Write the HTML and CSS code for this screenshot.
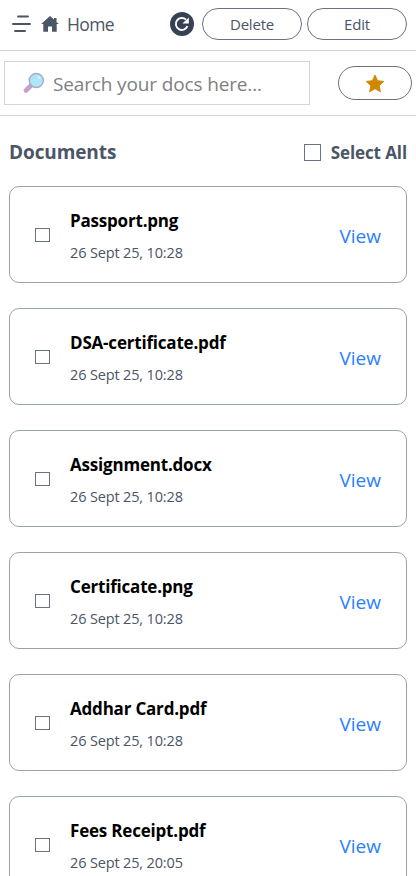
FILE: index.html
```html
<!DOCTYPE html>
<html lang="en">
<head>
<meta charset="utf-8">
<title>Documents</title>
<link rel="stylesheet" href="styles.css">
</head>
<body>
<header class="topbar">
  <svg class="menu" width="20" height="18" viewBox="0 0 20 18"><path d="M7 1.500h10M2 9h17M4 16h10" fill="none" stroke="currentColor" stroke-width="1.9" stroke-linecap="round"/></svg>
  <svg class="house" width="18" height="18" viewBox="0 0 18 18"><path d="M9 1 .2 9h2.100v7.800H7V11.500h4v5.300h4.700V9h2.100l-2.300-2.100V3H13v1.600z" fill="currentColor"/></svg>
  <span class="home">Home</span>
  <svg class="refresh" width="24" height="24" viewBox="0 0 24 24"><circle cx="12" cy="12" r="12" fill="#364153"/><path d="M17.400 14.200A6 6 0 1 1 16 7.600" fill="none" stroke="#fff" stroke-width="1.900"/><path d="M18.800 5.500v6.100h-6.400z" fill="#fff"/></svg>
  <button class="pill delete"><span>Delete</span></button>
  <button class="pill edit"><span>Edit</span></button>
</header>
<section class="searchbar">
  <div class="search">
    <svg class="lens" width="22" height="22" viewBox="0 0 22 22"><path d="M3 18.500 8 13.500" stroke="#c5a3c8" stroke-width="4.600" stroke-linecap="round"/><path d="m7.500 14 2-2" stroke="#aaa0bd" stroke-width="2.500"/><circle cx="13.300" cy="8.500" r="7" fill="#ace7f6" stroke="#afa9cf" stroke-width="1.500"/><ellipse cx="16" cy="5.500" rx="1.600" ry="1.100" fill="#d5f5fc" transform="rotate(35 16 5.500)"/></svg>
    <span class="hint">Search your docs here...</span>
  </div>
  <button class="pill favorite"><svg width="20" height="19" viewBox="0 0 20 19"><path d="m10 1 2.600 5.700 6.200.7-4.600 4.200 1.200 6.200L10 14.700l-5.400 3.100 1.200-6.200L1.200 7.400l6.200-.7z" fill="#d08700" stroke="#d08700" stroke-width=".9" stroke-linejoin="round"/></svg></button>
</section>
<main>
  <div class="heading">
    <h1>Documents</h1>
    <label class="all"><i class="box large"></i><b>Select All</b></label>
  </div>
  <article class="card"><i class="box"></i><div class="info"><h2>Passport.png</h2><p>26 Sept 25, 10:28</p></div><a class="view">View</a></article>
  <article class="card"><i class="box"></i><div class="info"><h2>DSA-certificate.pdf</h2><p>26 Sept 25, 10:28</p></div><a class="view">View</a></article>
  <article class="card"><i class="box"></i><div class="info"><h2>Assignment.docx</h2><p>26 Sept 25, 10:28</p></div><a class="view">View</a></article>
  <article class="card"><i class="box"></i><div class="info"><h2>Certificate.png</h2><p>26 Sept 25, 10:28</p></div><a class="view">View</a></article>
  <article class="card"><i class="box"></i><div class="info"><h2>Addhar Card.pdf</h2><p>26 Sept 25, 10:28</p></div><a class="view">View</a></article>
  <article class="card"><i class="box"></i><div class="info"><h2>Fees Receipt.pdf</h2><p>26 Sept 25, 20:05</p></div><a class="view">View</a></article>
</main>
</body>
</html>
```
FILE: styles.css
```css
* { box-sizing: border-box; margin: 0; padding: 0; }
body { height: 876px; overflow: hidden; background: #fff; color: #4a5565; font-family: "Open Sans", "Noto Sans", sans-serif; white-space: nowrap; }
svg { display: block; flex: none; }
.topbar { display: flex; align-items: center; height: 51px; padding: 0 9px 3px 11px; border-bottom: 1px solid #cad5e2; }
.menu { margin-right: 10px; }
.house { margin-right: 8px; }
.home { font-size: 17.5px; letter-spacing: -.6px; width: 103px; padding-top: 1px; }
.pill { display: flex; align-items: center; justify-content: center; flex: none; width: 100px; height: 32px; border: 1px solid #6a7282; border-radius: 17px; background: #fff; color: #4a5565; font: 500 15px "Open Sans", sans-serif; }
.pill span { padding-top: 1px; letter-spacing: -.2px; }
.delete { margin-left: 8px; }
.edit { margin-left: 5px; }
.searchbar { display: flex; align-items: center; justify-content: space-between; height: 65px; padding: 0 4px; border-bottom: 1px solid #d1d5dc; }
.search { display: flex; align-items: center; width: 306px; height: 44px; padding-left: 18px; border: 1px solid #d1d5dc; }
.hint { margin-left: 8px; padding-top: 1px; font-size: 19px; letter-spacing: -.14px; color: #808080; }
.favorite { width: 74px; height: 34px; }
main { padding: 0 9px; }
.heading { display: flex; align-items: center; justify-content: space-between; height: 70px; padding-top: 2px; }
h1 { font-size: 19px; font-weight: 700; line-height: 26px; letter-spacing: -.1px; }
.all { display: flex; align-items: center; gap: 10px; font-size: 17px; letter-spacing: -.1px; }
.box { display: block; flex: none; width: 15px; height: 14px; border: 1px solid #6a7282; }
.large { width: 17px; height: 17px; }
.card { display: flex; align-items: center; height: 97px; margin-bottom: 25px; padding: 0 25px; border: 1px solid #99a1af; border-radius: 10px; }
.info { flex: 1; margin-left: 20px; padding-top: 4px; }
h2 { color: #000; font-size: 17px; font-weight: 700; line-height: 32px; letter-spacing: -.2px; }
p { font-size: 14.5px; line-height: 32px; letter-spacing: -.15px; }
.view { font-size: 19px; color: #2b7fff; padding-top: 2px; }
```
